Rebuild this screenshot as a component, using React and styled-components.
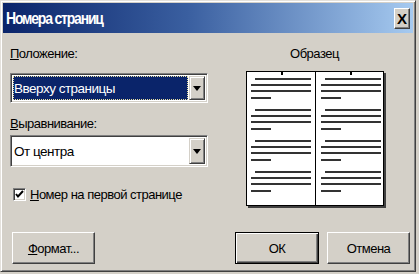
import React from "react";
import styled, { createGlobalStyle } from "styled-components";

const GlobalStyle = createGlobalStyle`
  html, body {
    margin: 0;
    padding: 0;
    background: #d4d0c8;
  }
  body {
    font-family: "Liberation Sans", Arial, sans-serif;
    font-size: 13px;
    letter-spacing: -0.5px;
    color: #000;
  }
`;

// Window frame
const Window = styled.div`
  width: 416px;
  height: 272px;
  box-sizing: border-box;
  background: #d4d0c8;
  border-top: 1px solid #e4e1dc;
  border-left: 1px solid #e4e1dc;
  border-right: 1px solid #404040;
  border-bottom: 1px solid #404040;
  box-shadow: inset 1px 1px 0 #ffffff, inset -1px -1px 0 #808080;
  padding: 2px;
  display: flex;
  flex-direction: column;
`;

const TitleBar = styled.div`
  height: 30px;
  display: flex;
  align-items: center;
  justify-content: space-between;
  padding: 0 3px 0 3px;
  background: linear-gradient(90deg, #0a246a 0%, #3a5fa0 45%, #a6caf0 100%);
`;

const TitleText = styled.div`
  color: #fff;
  font-weight: bold;
  font-size: 14px;
  letter-spacing: -1.2px;
  transform: scaleY(1.12);
`;

const CloseButton = styled.div`
  width: 16px;
  height: 21px;
  box-sizing: border-box;
  background: #d4d0c8;
  border-top: 1px solid #ffffff;
  border-left: 1px solid #ffffff;
  border-right: 1px solid #404040;
  border-bottom: 1px solid #404040;
  box-shadow: inset -1px -1px 0 #808080;
  display: flex;
  align-items: center;
  justify-content: center;
  font-weight: bold;
  font-size: 15px;
  letter-spacing: 0;
  line-height: 1;
`;

const Body = styled.div`
  display: flex;
  padding: 10px 0 0 7px;
`;

const LeftCol = styled.div`
  width: 198px;
  display: flex;
  flex-direction: column;
`;

const RightCol = styled.div`
  flex: 1;
  display: flex;
  flex-direction: column;
  align-items: center;
  padding-right: 18px;
  padding-left: 26px;
`;

const Label = styled.div`
  height: 16px;
  line-height: 16px;
  margin-top: ${({ $top }) => $top || 0}px;
`;

const Key = styled.span`
  text-decoration: underline;
`;

// Combo box
const Combo = styled.div`
  height: ${({ $h }) => $h}px;
  margin-top: ${({ $top }) => $top}px;
  box-sizing: border-box;
  background: #fff;
  border-top: 1px solid #808080;
  border-left: 1px solid #808080;
  border-right: 1px solid #ffffff;
  border-bottom: 1px solid #ffffff;
  box-shadow: inset 1px 1px 0 #404040, inset -1px -1px 0 #d4d0c8;
  padding: 2px;
  display: flex;
`;

const ComboValue = styled.div`
  flex: 1;
  display: flex;
  align-items: center;
  padding-left: 1px;
  white-space: nowrap;
  font-size: 13.5px;
  background: ${({ $selected }) => ($selected ? "#0a246a" : "#fff")};
  color: ${({ $selected }) => ($selected ? "#fff" : "#000")};
  outline: ${({ $selected }) => ($selected ? "1px dotted #e8e0a0" : "none")};
  outline-offset: -1px;
  margin-right: 1px;
`;

const ComboArrow = styled.div`
  width: 16px;
  box-sizing: border-box;
  background: #d4d0c8;
  border-top: 1px solid #d4d0c8;
  border-left: 1px solid #d4d0c8;
  border-right: 1px solid #404040;
  border-bottom: 1px solid #404040;
  box-shadow: inset 1px 1px 0 #fff, inset -1px -1px 0 #808080;
  display: flex;
  align-items: center;
  justify-content: center;

  &:after {
    content: "";
    border-left: 4px solid transparent;
    border-right: 4px solid transparent;
    border-top: 5px solid #000;
  }
`;

const CheckRow = styled.div`
  margin-top: 19px;
  display: flex;
  align-items: center;
  gap: 4px;
  padding-left: 3px;
  height: 16px;
  white-space: nowrap;
`;

const CheckBox = styled.div`
  width: 13px;
  height: 13px;
  box-sizing: border-box;
  background: #fff;
  border-top: 1px solid #808080;
  border-left: 1px solid #808080;
  border-right: 1px solid #fff;
  border-bottom: 1px solid #fff;
  box-shadow: inset 1px 1px 0 #404040, inset -1px -1px 0 #d4d0c8;
  display: flex;
  align-items: center;
  justify-content: center;
`;

const Caption = styled.div`
  height: 16px;
  line-height: 16px;
  margin-top: 3px;
`;

const PreviewBox = styled.div`
  margin-top: 9px;
  width: 138px;
  height: 135px;
  box-shadow: 2px 2px 0 #404040;
`;

const Footer = styled.div`
  display: flex;
  align-items: center;
  padding: 0 0 0 9px;
  margin-top: 26px;
`;

const Button = styled.div`
  width: ${({ $w }) => $w}px;
  height: 32px;
  box-sizing: border-box;
  background: #d4d0c8;
  display: flex;
  align-items: center;
  justify-content: center;
  white-space: nowrap;
  margin-left: ${({ $left }) => $left || 0}px;
  border: 1px solid;
  border-color: ${({ $default }) =>
    $default ? "#000" : "#fff #404040 #404040 #fff"};
  box-shadow: ${({ $default }) =>
    $default
      ? "inset 1px 1px 0 #fff, inset -1px -1px 0 #404040, inset -2px -2px 0 #808080"
      : "inset -1px -1px 0 #808080"};
`;

const pageLines = (x0) => {
  const out = [];
  for (let g = 0; g < 4; g++) {
    const y = 7 + g * 31;
    out.push([x0 + 9, x0 + 65, y]);
    out.push([x0 + 5, x0 + 65, y + 6]);
    out.push([x0 + 5, x0 + 65, y + 12]);
    out.push([x0 + 5, x0 + 25, y + 19]);
  }
  return out;
};

const Preview = () => (
  <svg width="138" height="135" viewBox="0 0 138 135">
    <rect x="0.5" y="0.5" width="137" height="134" fill="#fff" stroke="#000" />
    <line x1="69.5" y1="0" x2="69.5" y2="135" stroke="#000" />
    <rect x="35" y="1" width="2" height="3" fill="#000" />
    <rect x="104" y="1" width="2" height="3" fill="#000" />
    {[...pageLines(0), ...pageLines(70)].map(([a, b, y], i) => (
      <rect key={i} x={a} y={y} width={b - a} height="2" fill="#333" />
    ))}
  </svg>
);

export default function App() {
  return (
    <>
      <GlobalStyle />
      <Window>
        <TitleBar>
          <TitleText>Номера страниц</TitleText>
          <CloseButton>X</CloseButton>
        </TitleBar>
        <Body>
          <LeftCol>
            <Label $top={3}>
              <Key>П</Key>оложение:
            </Label>
            <Combo $h={30} $top={11}>
              <ComboValue $selected>Вверху страницы</ComboValue>
              <ComboArrow />
            </Combo>
            <Label $top={13}>
              <Key>В</Key>ыравнивание:
            </Label>
            <Combo $h={32} $top={3}>
              <ComboValue>От центра</ComboValue>
              <ComboArrow />
            </Combo>
            <CheckRow>
              <CheckBox>
                <svg width="9" height="9" viewBox="0 0 9 9">
                  <path d="M1 4 L3 6.5 L8 1" stroke="#000" strokeWidth="2" fill="none" />
                </svg>
              </CheckBox>
              <span>
                <Key>Н</Key>омер на первой странице
              </span>
            </CheckRow>
          </LeftCol>
          <RightCol>
            <Caption>Образец</Caption>
            <PreviewBox>
              <Preview />
            </PreviewBox>
          </RightCol>
        </Body>
        <Footer>
          <Button $w={83}>
            <span>
              <Key>Ф</Key>ормат...
            </span>
          </Button>
          <Button $w={84} $left={140} $default>
            ОК
          </Button>
          <Button $w={83} $left={8}>
            Отмена
          </Button>
        </Footer>
      </Window>
    </>
  );
}
